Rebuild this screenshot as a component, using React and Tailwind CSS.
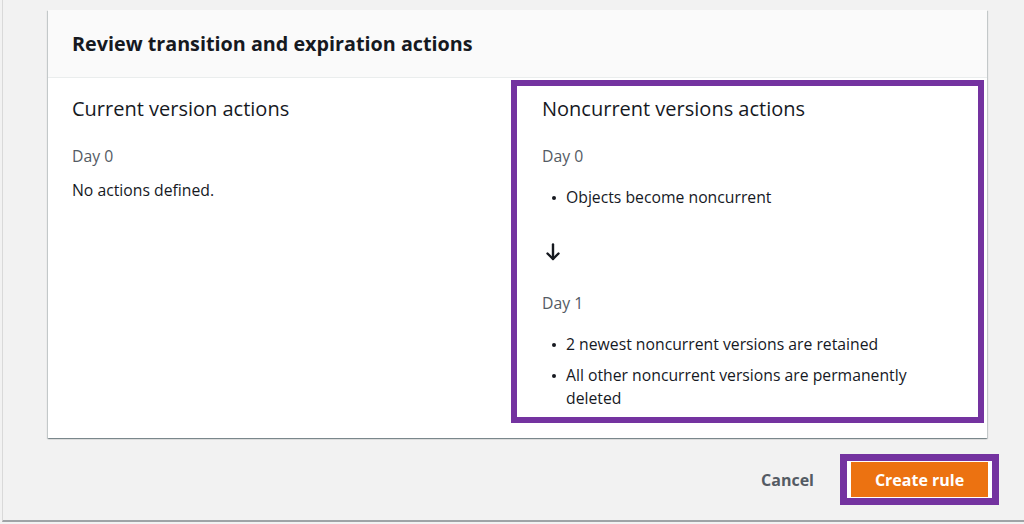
import React from 'react';

const font = { fontFamily: '"Open Sans", "Noto Sans", sans-serif' };

const Bullet = ({ children }) => (
  <div className="flex items-start">
    <span className="mt-[10px] ml-[10px] mr-[10px] h-[4px] w-[4px] shrink-0 rounded-full bg-[#16191f]" />
    <span className="text-[15.75px] leading-[23px] text-[#16191f]">{children}</span>
  </div>
);

const App = () => {
  return (
    <div className="h-[524px] w-[1024px] overflow-hidden bg-[#f2f2f2] pl-[2px]" style={font}>
      <div className="h-[522px] border-l border-b-2 border-l-[#d9d9d9] border-b-[#9fa3a6] pt-[10px]">
        {/* Review card */}
        <div className="ml-[45px] w-[939px] bg-white shadow-[0_1px_1px_0_rgba(0,28,36,0.3),1px_1px_1px_0_rgba(0,28,36,0.15),-1px_1px_1px_0_rgba(0,28,36,0.15)]">
          <div className="flex h-[68px] items-center border-b border-[#eaeded] bg-[#fafafa] px-6">
            <h2 className="text-[19.75px] font-bold text-[#16191f]">Review transition and expiration actions</h2>
          </div>

          <div className="flex">
            {/* Current version actions */}
            <div className="w-[463px] pl-6 pt-[17px]">
              <h3 className="text-[20px] leading-[28px] text-[#16191f]">Current version actions</h3>
              <p className="mt-[23px] text-[15.75px] leading-[20px] text-[#545b64]">Day 0</p>
              <p className="mt-[13px] text-[15.75px] leading-[22px] text-[#16191f]">No actions defined.</p>
            </div>

            {/* Noncurrent versions actions, highlighted */}
            <div className="mt-[2px] mb-[15px] w-[473px] border-[6px] border-[#7433a0] pl-[25px] pr-[40px] pt-[9px] pb-[7px]">
              <h3 className="text-[20px] leading-[28px] text-[#16191f]">Noncurrent versions actions</h3>
              <p className="mt-[23px] text-[15.75px] leading-[20px] text-[#545b64]">Day 0</p>
              <div className="mt-[20px]">
                <Bullet>Objects become noncurrent</Bullet>
              </div>
              <div className="mt-[34px] pl-[4px]">
                <svg width="14" height="18" viewBox="0 0 14 18" fill="none" stroke="#16191f" strokeWidth="2.4" strokeLinecap="round" strokeLinejoin="round">
                  <path d="M7 1.5V16" />
                  <path d="M1.5 10.5L7 16l5.5-5.5" />
                </svg>
              </div>
              <p className="mt-[32px] text-[15.75px] leading-[20px] text-[#545b64]">Day 1</p>
              <div className="mt-[20px] space-y-[8px]">
                <Bullet>2 newest noncurrent versions are retained</Bullet>
                <Bullet>All other noncurrent versions are permanently deleted</Bullet>
              </div>
            </div>
          </div>
        </div>

        {/* Actions */}
        <div className="mt-[16px] flex items-center justify-end pr-[25px]">
          <button className="mr-[26px] text-[16px] font-bold text-[#545b64]">Cancel</button>
          <div className="border-[7px] border-[#7433a0] bg-white px-[4px] py-[1px]">
            <button className="h-[35px] w-[137px] bg-[#ec7211] text-[16px] font-bold text-white">Create rule</button>
          </div>
        </div>
      </div>
    </div>
  );
};

export default App;
